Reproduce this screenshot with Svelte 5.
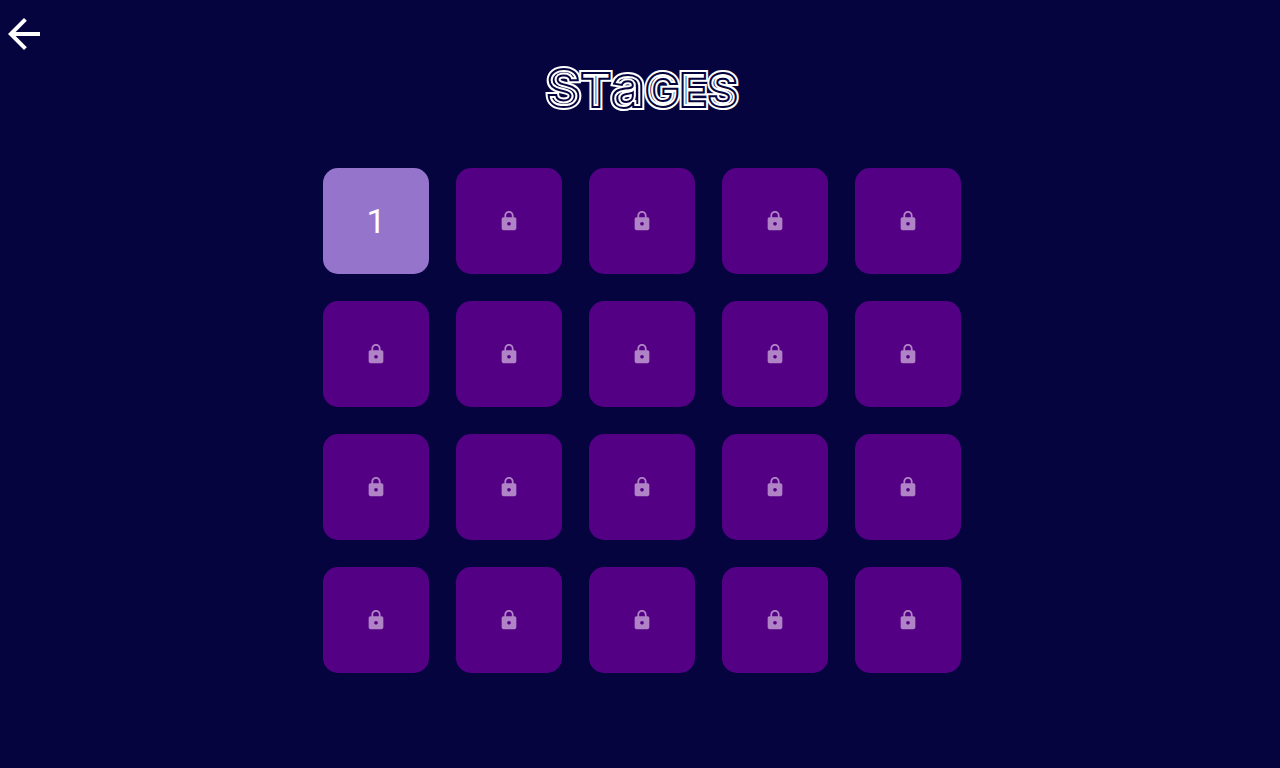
<script lang="ts">
	const title = [
		{ text: 'S', kind: 'initial' },
		{ text: 't', kind: 'capital' },
		{ text: 'a', kind: 'round' },
		{ text: 'g', kind: 'capital' },
		{ text: 'e', kind: 'capital' },
		{ text: 's', kind: 'capital' }
	];

	const unlocked = 1;
	const stages = Array.from({ length: 20 }, (_, i) => i + 1);
</script>

<div class="page">
	<button class="back" aria-label="Back">
		<svg viewBox="0 0 24 24" class="back-icon">
			<path d="M20 11H7.83l5.59-5.59L12 4l-8 8 8 8 1.41-1.41L7.83 13H20v-2z" />
		</svg>
	</button>

	<main>
		<h1>
			{#each title as part}<span class={part.kind} data-text={part.text}>{part.text}</span>{/each}
		</h1>

		<div class="stages">
			{#each stages as stage}
				{#if stage <= unlocked}
					<button class="stage open">{stage}</button>
				{:else}
					<button class="stage" disabled aria-label="Stage {stage}, locked">
						<svg viewBox="0 0 24 24" class="lock-icon">
							<path
								d="M18 8h-1V6c0-2.76-2.24-5-5-5S7 3.24 7 6v2H6c-1.1 0-2 .9-2 2v10c0 1.1.9 2 2 2h12c1.1 0 2-.9 2-2V10c0-1.1-.9-2-2-2zm-6 9c-1.1 0-2-.9-2-2s.9-2 2-2 2 .9 2 2-.9 2-2 2zm3.1-9H8.9V6c0-1.71 1.39-3.1 3.1-3.1s3.1 1.39 3.1 3.1v2z"
							/>
						</svg>
					</button>
				{/if}
			{/each}
		</div>
	</main>
</div>

<style>
	:global(body) {
		margin: 0;
		background: #05043e;
	}

	.page {
		font-family: Roboto, sans-serif;
		color: white;
		padding-top: 10px;
	}

	button {
		font: inherit;
		color: inherit;
		border: none;
		padding: 0;
		cursor: pointer;
	}

	.back {
		display: flex;
		background: none;
	}

	.back-icon {
		width: 48px;
		height: 48px;
		fill: white;
	}

	main {
		display: flex;
		flex-direction: column;
		align-items: center;
		padding: 0 12px 96px 16px;
	}

	h1 {
		display: flex;
		align-items: baseline;
		margin: 0 0 50px;
		font-family: Inter, sans-serif;
		font-size: 46px;
		font-weight: 700;
		line-height: 56px;
	}

	/* White outline with a thinner dark one on top leaves parallel lines */
	h1 span {
		position: relative;
		color: #05043e;
		-webkit-text-stroke: 6px white;
	}

	h1 span::after {
		content: attr(data-text);
		position: absolute;
		left: 0;
		top: 0;
		color: transparent;
		-webkit-text-stroke: 2px #05043e;
	}

	.initial {
		font-size: 52px;
	}

	.capital {
		text-transform: uppercase;
	}

	.round {
		font-size: 58px;
	}

	.stages {
		display: grid;
		grid-template-columns: repeat(5, 1fr);
		gap: 27px;
		width: 100%;
		max-width: 638px;
	}

	.stage {
		display: flex;
		align-items: center;
		justify-content: center;
		aspect-ratio: 1;
		border-radius: 15px;
		background: #530085;
		font-size: 34px;
	}

	.stage:disabled {
		cursor: default;
	}

	.open {
		background: #9575cc;
	}

	.lock-icon {
		width: 22px;
		height: 22px;
		fill: #b083c6;
	}
</style>
